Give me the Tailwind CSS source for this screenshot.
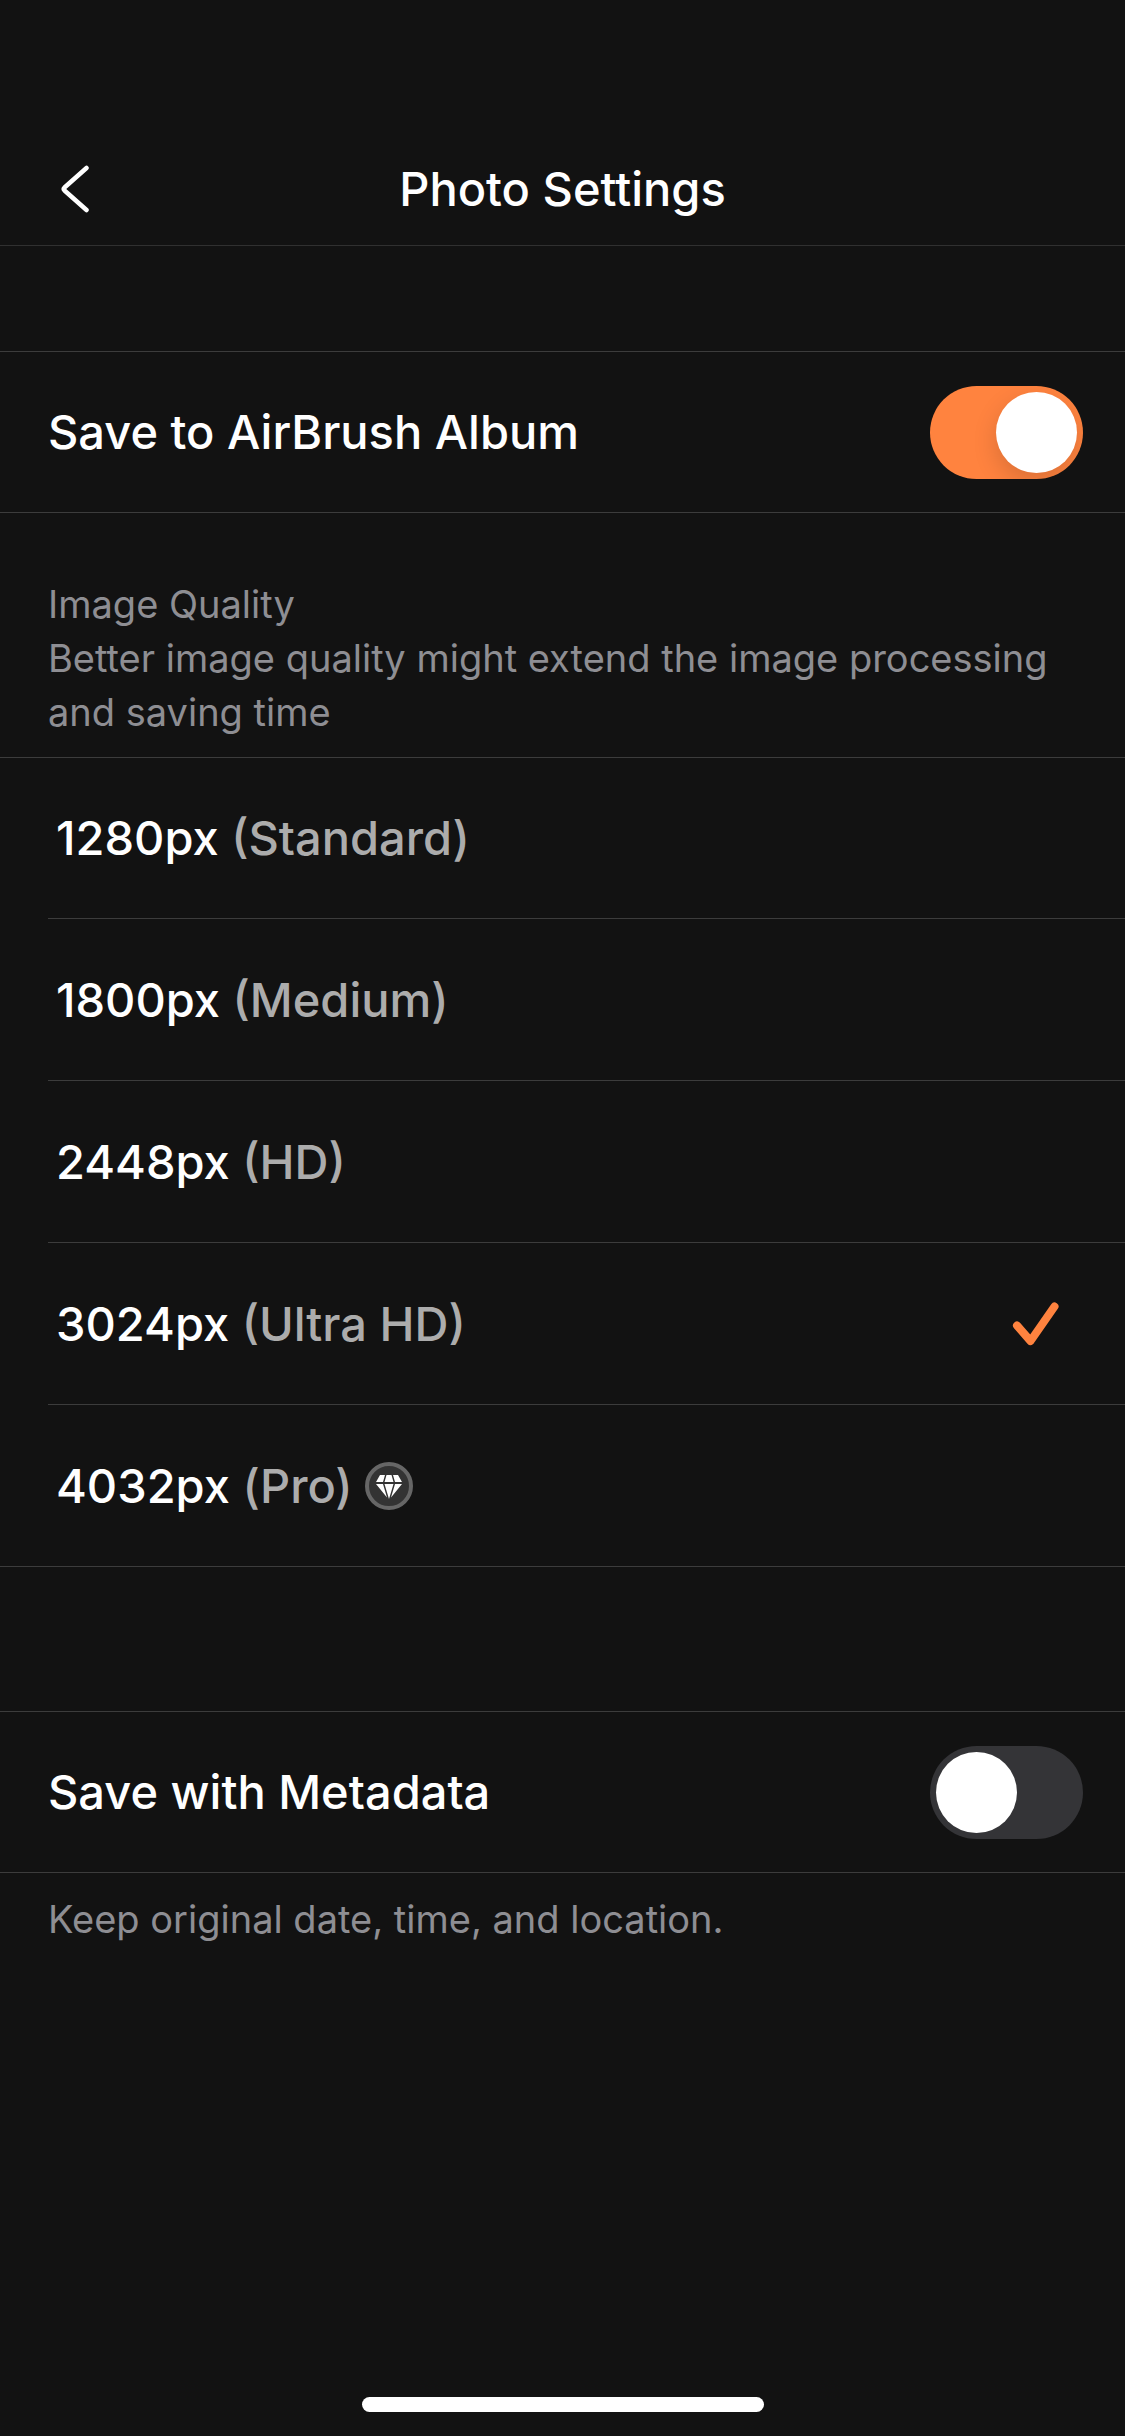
<!DOCTYPE html>
<html lang="en">
<head>
  <meta charset="UTF-8">
  <meta name="viewport" content="width=device-width, initial-scale=1.0">
  <title>Photo Settings</title>
  <script src="https://cdn.jsdelivr.net/npm/@tailwindcss/browser@4"></script>
</head>
<body class="min-h-screen flex flex-col bg-[#121212] text-white text-[47px] font-medium leading-[56px] font-['Inter','Liberation_Sans',sans-serif]">
  <header class="pt-[132px] border-b border-[#303030]">
    <div class="h-[113px] px-12 grid grid-cols-[1fr_auto_1fr] items-center">
      <button type="button" aria-label="Back" class="w-14 h-14 pl-3">
        <svg class="w-8 h-14" viewBox="0 0 32 56" fill="none" stroke="#fff" stroke-width="4.5" stroke-linecap="round" stroke-linejoin="round"><path d="M26.500 7L4.500 26.500Q3 28 4.500 29.500L26.500 49"/></svg>
      </button>
      <h1>Photo Settings</h1>
    </div>
  </header>

  <main class="pt-[105px]">
    <section class="h-[162px] pl-12 pr-[42px] flex items-center justify-between border-y border-[#3c3c3c]">
      <label for="album">Save to AirBrush Album</label>
      <input id="album" type="checkbox" role="switch" checked class="appearance-none shrink-0 flex w-[153px] h-[93px] p-[6px] rounded-full overflow-hidden bg-[#343437] checked:bg-[#ff833f] checked:justify-end before:content-[''] before:w-[81px] before:h-[81px] before:rounded-full before:bg-white before:shadow-[0_9px_24px_rgba(0,0,0,0.15)]">
    </section>

    <section class="pt-16" role="radiogroup" aria-labelledby="quality-title">
      <div class="px-12 pb-[18px] text-[38px] leading-[54px] font-normal text-[#8e8e93]">
        <h2 id="quality-title">Image Quality</h2>
        <p>Better image quality might extend the image processing and saving time</p>
      </div>
      <div class="pl-12 border-y border-[#3c3c3c] divide-y divide-[#3c3c3c]">
        <label class="h-[161px] pl-2 pr-[62px] flex items-center">
          <input type="radio" name="quality" class="sr-only">
          <span>1280px <span class="text-[#acacac]">(Standard)</span></span>
        </label>
        <label class="h-[162px] pl-2 pr-[62px] flex items-center">
          <input type="radio" name="quality" class="sr-only">
          <span>1800px <span class="text-[#acacac]">(Medium)</span></span>
        </label>
        <label class="h-[162px] pl-2 pr-[62px] flex items-center">
          <input type="radio" name="quality" class="sr-only">
          <span>2448px <span class="text-[#acacac]">(HD)</span></span>
        </label>
        <label class="h-[162px] pl-2 pr-[62px] flex items-center">
          <input type="radio" name="quality" checked class="sr-only">
          <span>3024px <span class="text-[#acacac]">(Ultra HD)</span></span>
          <svg class="ml-auto w-[54px] h-[54px]" viewBox="0 0 54 54" fill="none" stroke="#ff833f" stroke-width="8" stroke-linecap="round" stroke-linejoin="round"><path d="M8 28.500L21.500 44L45.500 9.500"/></svg>
        </label>
        <label class="h-[161px] pl-2 pr-[62px] flex items-center gap-3">
          <input type="radio" name="quality" class="sr-only">
          <span>4032px <span class="text-[#acacac]">(Pro)</span></span>
          <svg class="w-12 h-12" viewBox="0 0 48 48">
            <circle cx="24" cy="24" r="22" fill="#333" stroke="#666" stroke-width="4"/>
            <path fill="#fff" d="M15 13h5l-2 7h-7zM21.500 13h5l2 7h-9zM28 13h5l4 7h-7zM11 22h7l4 13.500zM19.500 22h9l-4.500 15zM30 22h7l-11 13.500z"/>
          </svg>
        </label>
      </div>
    </section>

    <section class="mt-36 h-[162px] pl-12 pr-[42px] flex items-center justify-between border-y border-[#3c3c3c]">
      <label for="metadata">Save with Metadata</label>
      <input id="metadata" type="checkbox" role="switch" class="appearance-none shrink-0 flex w-[153px] h-[93px] p-[6px] rounded-full overflow-hidden bg-[#343437] checked:bg-[#ff833f] checked:justify-end before:content-[''] before:w-[81px] before:h-[81px] before:rounded-full before:bg-white">
    </section>
    <p class="px-12 pt-[19px] text-[38px] leading-[54px] font-normal text-[#8e8e93]">Keep original date, time, and location.</p>
  </main>

  <div class="mt-auto mb-6 mx-auto w-[402px] h-[15px] rounded-full bg-white"></div>
</body>
</html>
